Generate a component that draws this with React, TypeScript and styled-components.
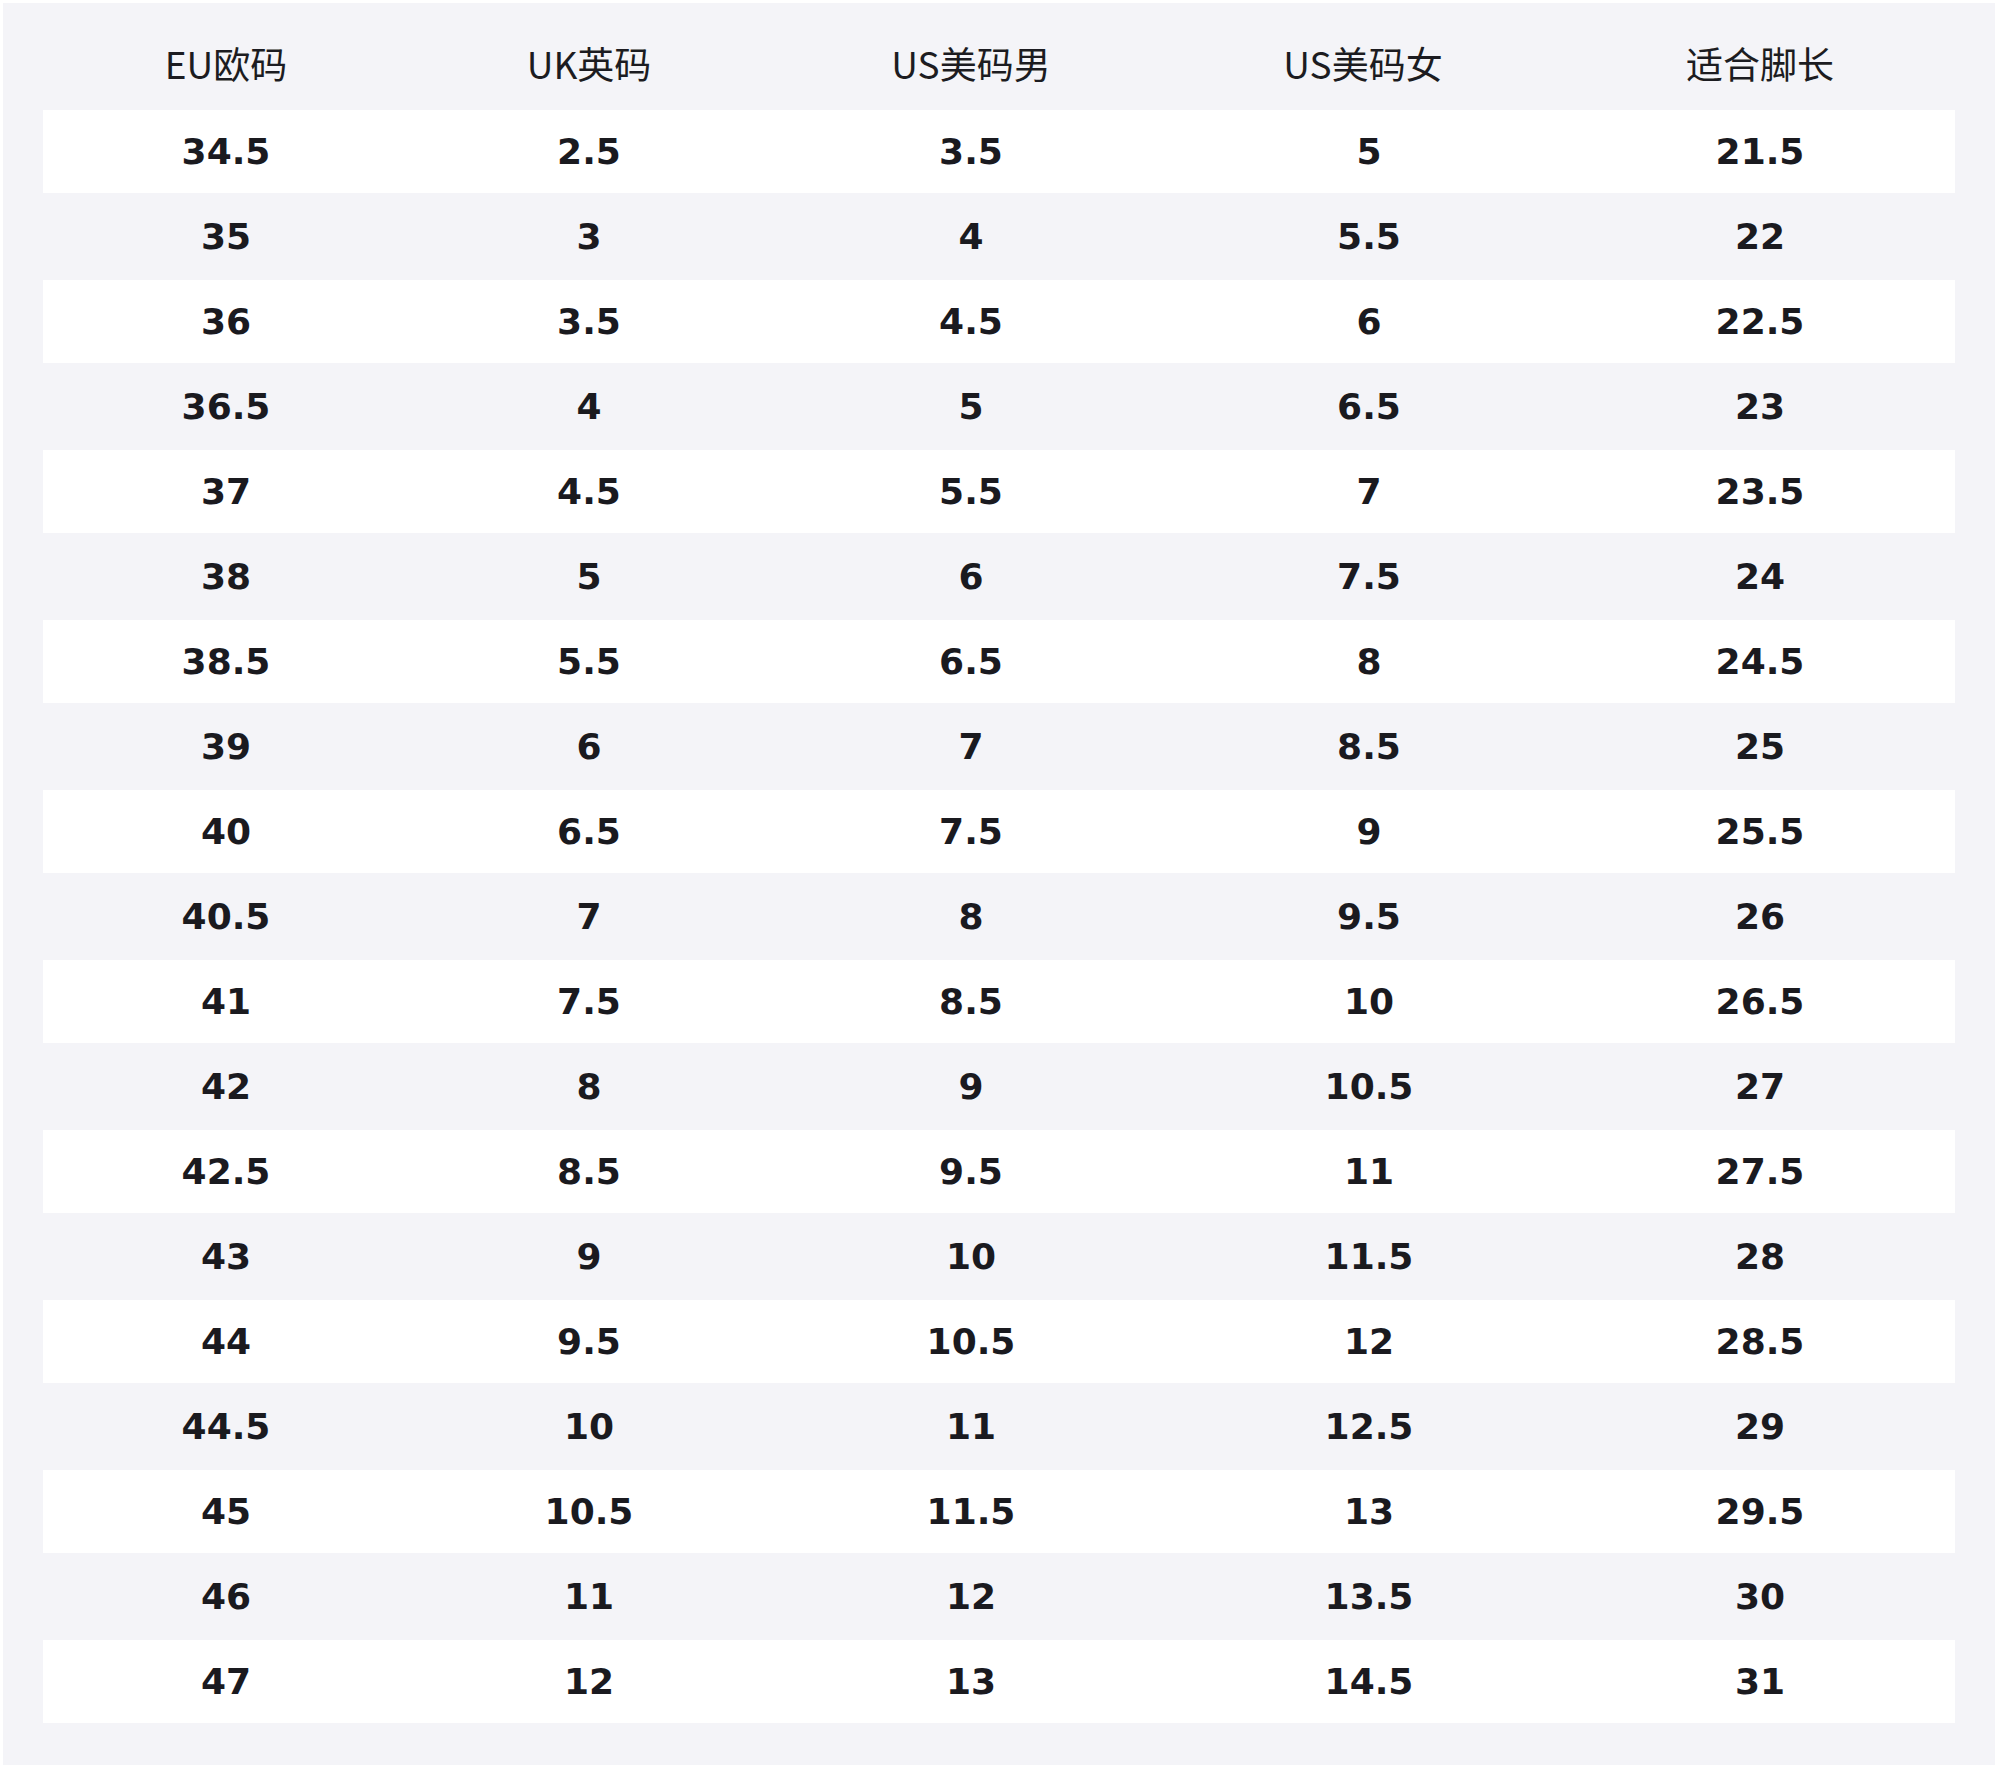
import React from "react";
import styled, { createGlobalStyle } from "styled-components";

const GlobalStyle = createGlobalStyle`
  html, body {
    margin: 0;
    padding: 0;
    background: #ffffff;
  }
  body {
    font-family: "DejaVu Sans", "Noto Sans CJK SC", sans-serif;
  }
`;

const Sheet = styled.div`
  margin: 3px;
  background: #f4f4f8;
  padding: 20px 40px 42px;
  display: flex;
  flex-direction: column;
`;

const COLS = "366fr 360fr 404fr 392fr 390fr";

const HeaderRow = styled.div`
  display: grid;
  grid-template-columns: ${COLS};
  height: 87px;
  box-sizing: border-box;
  padding-bottom: 6px;
  align-items: center;
`;

const HeaderCell = styled.div`
  text-align: center;
  font-family: "Noto Sans CJK SC", "Noto Sans", sans-serif;
  font-size: 37px;
  font-weight: 400;
  color: #1c1c21;
  line-height: 1;

  &:nth-child(4) {
    padding-right: 12px;
  }
`;

const Row = styled.div<{ $striped: boolean }>`
  display: grid;
  grid-template-columns: ${COLS};
  height: ${(p) => (p.$striped ? "83px" : "87px")};
  align-items: center;
  background: ${(p) => (p.$striped ? "#ffffff" : "transparent")};
`;

const Cell = styled.div`
  text-align: center;
  font-family: "DejaVu Sans", sans-serif;
  font-weight: 700;
  font-size: 36px;
  color: #1a1a1f;
  line-height: 1;
`;

const headers = ["EU欧码", "UK英码", "US美码男", "US美码女", "适合脚长"];

const data: string[][] = [
  ["34.5", "2.5", "3.5", "5", "21.5"],
  ["35", "3", "4", "5.5", "22"],
  ["36", "3.5", "4.5", "6", "22.5"],
  ["36.5", "4", "5", "6.5", "23"],
  ["37", "4.5", "5.5", "7", "23.5"],
  ["38", "5", "6", "7.5", "24"],
  ["38.5", "5.5", "6.5", "8", "24.5"],
  ["39", "6", "7", "8.5", "25"],
  ["40", "6.5", "7.5", "9", "25.5"],
  ["40.5", "7", "8", "9.5", "26"],
  ["41", "7.5", "8.5", "10", "26.5"],
  ["42", "8", "9", "10.5", "27"],
  ["42.5", "8.5", "9.5", "11", "27.5"],
  ["43", "9", "10", "11.5", "28"],
  ["44", "9.5", "10.5", "12", "28.5"],
  ["44.5", "10", "11", "12.5", "29"],
  ["45", "10.5", "11.5", "13", "29.5"],
  ["46", "11", "12", "13.5", "30"],
  ["47", "12", "13", "14.5", "31"],
];

export default function App() {
  return (
    <>
      <GlobalStyle />
      <Sheet>
        <HeaderRow>
          {headers.map((h) => (
            <HeaderCell key={h}>{h}</HeaderCell>
          ))}
        </HeaderRow>
        {data.map((row, i) => (
          <Row key={i} $striped={i % 2 === 0}>
            {row.map((v, j) => (
              <Cell key={j}>{v}</Cell>
            ))}
          </Row>
        ))}
      </Sheet>
    </>
  );
}
